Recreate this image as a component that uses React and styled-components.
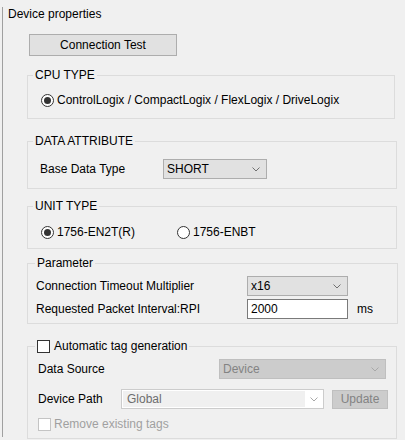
import React from "react";
import styled, { createGlobalStyle } from "styled-components";

const GlobalStyle = createGlobalStyle`
  html, body {
    margin: 0;
    background: #f0f0f0;
  }
  body {
    font-family: "Liberation Sans", Arial, sans-serif;
    font-size: 12px;
    color: #000;
  }
`;

const Page = styled.div`
  width: 405px;
  height: 440px;
  overflow: hidden;
  padding-left: 2px;
  box-sizing: border-box;
`;

const Panel = styled.div`
  margin-top: 10px;
  height: 430px;
  border-left: 1px solid #a0a0a0;
  padding-left: 5px;
`;

const Header = styled.div`
  margin-top: -3px;
  line-height: 14px;
`;

const PushButton = styled.button`
  display: block;
  margin: 13px 0 0 21px;
  width: 148px;
  height: 22px;
  border: 1px solid #adadad;
  background: #e1e1e1;
  font: inherit;
  color: #000;
  padding: 0;
`;

const Group = styled.fieldset`
  margin: ${(p) => p.$top}px 0 0 19px;
  width: ${(p) => p.$width || 370}px;
  box-sizing: border-box;
  padding: 0;
  min-width: 0;
  border: 1px solid #dcdcdc;
`;

const Legend = styled.legend`
  margin-left: ${(p) => p.$offset || 5}px;
  padding: 0 2px;
  line-height: 14px;
  display: flex;
  align-items: center;
  gap: 4px;
`;

const Body = styled.div`
  padding: ${(p) => p.$pad};
  display: flex;
  flex-direction: column;
  gap: ${(p) => p.$gap || 0}px;
`;

const Row = styled.div`
  display: flex;
  align-items: center;
  height: ${(p) => p.$h || 20}px;
  margin-top: ${(p) => p.$mt || 0}px;
`;

const Label = styled.span`
  width: ${(p) => (p.$w ? `${p.$w}px` : "auto")};
  flex: none;
  color: ${(p) => (p.$disabled ? "#a0a0a0" : "#000")};
`;

const Choice = styled.label`
  display: inline-flex;
  align-items: center;
  gap: 3px;
  height: 16px;
  width: ${(p) => (p.$w ? `${p.$w}px` : "auto")};
`;

const RadioDot = styled.span`
  width: 13px;
  height: 13px;
  box-sizing: border-box;
  border: 1px solid #333;
  border-radius: 50%;
  background: #fff;
  display: inline-flex;
  align-items: center;
  justify-content: center;
  &::after {
    content: "";
    width: 7px;
    height: 7px;
    border-radius: 50%;
    background: ${(p) => (p.$on ? "#333" : "transparent")};
  }
`;

const CheckBox = styled.span`
  width: 13px;
  height: 13px;
  box-sizing: border-box;
  border: 1px solid ${(p) => (p.$disabled ? "#c4c4c4" : "#333")};
  background: #fff;
  flex: none;
`;

const Select = styled.div`
  width: ${(p) => p.$w}px;
  height: 20px;
  box-sizing: border-box;
  border: 1px solid ${(p) => (p.$disabled ? "#bfbfbf" : "#adadad")};
  background: ${(p) => (p.$disabled ? "#cccccc" : "#e1e1e1")};
  color: ${(p) => (p.$disabled ? "#838383" : "#000")};
  display: flex;
  align-items: center;
  justify-content: space-between;
  padding: 0 6px 0 3px;
`;

const Combo = styled.div`
  width: ${(p) => p.$w}px;
  height: 20px;
  box-sizing: border-box;
  border: 1px solid #cccccc;
  background: #fff;
  padding: 1px;
  display: flex;
  flex: none;
`;

const ComboText = styled.div`
  flex: 1;
  background: #f0f0f0;
  color: #6d6d6d;
  padding-left: 4px;
  line-height: 16px;
`;

const ComboArrow = styled.div`
  width: 17px;
  display: flex;
  align-items: center;
  justify-content: center;
`;

const TextInput = styled.div`
  width: 101px;
  height: 20px;
  box-sizing: border-box;
  border: 1px solid #7a7a7a;
  background: #fff;
  padding-left: 3px;
  line-height: 18px;
`;

const Unit = styled.span`
  margin-left: 9px;
`;

const SmallButton = styled.div`
  margin-left: 8px;
  width: 56px;
  height: 19px;
  box-sizing: border-box;
  border: 1px solid #bfbfbf;
  background: #cccccc;
  color: #838383;
  display: flex;
  align-items: center;
  justify-content: center;
`;

const Chevron = ({ color = "#707070" }) => (
  <svg width="8" height="5" viewBox="0 0 8 5">
    <path d="M0.5 0.5 L4 4 L7.5 0.5" fill="none" stroke={color} strokeWidth="1" />
  </svg>
);

export default function App() {
  return (
    <>
      <GlobalStyle />
      <Page>
        <Panel>
          <Header>Device properties</Header>
          <PushButton>Connection Test</PushButton>

          <Group $top={12} $width={368}>
            <Legend>CPU TYPE</Legend>
            <Body $pad="10px 0 10px 13px">
              <Choice>
                <RadioDot $on />
                ControlLogix / CompactLogix / FlexLogix / DriveLogix
              </Choice>
            </Body>
          </Group>

          <Group $top={15}>
            <Legend>DATA ATTRIBUTE</Legend>
            <Body $pad="11px 0 9px 12px">
              <Row>
                <Label $w={123}>Base Data Type</Label>
                <Select $w={104}>
                  SHORT
                  <Chevron />
                </Select>
              </Row>
            </Body>
          </Group>

          <Group $top={10}>
            <Legend>UNIT TYPE</Legend>
            <Body $pad="11px 0 8px 13px">
              <Row $h={16}>
                <Choice $w={136}>
                  <RadioDot $on />
                  1756-EN2T(R)
                </Choice>
                <Choice>
                  <RadioDot />
                  1756-ENBT
                </Choice>
              </Row>
            </Body>
          </Group>

          <Group $top={7} $width={371}>
            <Legend $offset={7}>Parameter</Legend>
            <Body $pad="6px 0 4px 8px" $gap={3}>
              <Row>
                <Label $w={211}>Connection Timeout Multiplier</Label>
                <Select $w={101}>
                  x16
                  <Chevron />
                </Select>
              </Row>
              <Row>
                <Label $w={211}>Requested Packet Interval:RPI</Label>
                <TextInput>2000</TextInput>
                <Unit>ms</Unit>
              </Row>
            </Body>
          </Group>

          <Group $top={15}>
            <Legend $offset={7}>
              <CheckBox />
              Automatic tag generation
            </Legend>
            <Body $pad="6px 0 6px 10px">
              <Row>
                <Label $w={181}>Data Source</Label>
                <Select $w={167} $disabled>
                  Device
                  <Chevron color="#a8a8a8" />
                </Select>
              </Row>
              <Row $mt={10}>
                <Label $w={83}>Device Path</Label>
                <Combo $w={203}>
                  <ComboText>Global</ComboText>
                  <ComboArrow>
                    <Chevron color="#a8a8a8" />
                  </ComboArrow>
                </Combo>
                <SmallButton>Update</SmallButton>
              </Row>
              <Row $h={16} $mt={7}>
                <Choice>
                  <CheckBox $disabled />
                  <Label $disabled>Remove existing tags</Label>
                </Choice>
              </Row>
            </Body>
          </Group>
        </Panel>
      </Page>
    </>
  );
}
